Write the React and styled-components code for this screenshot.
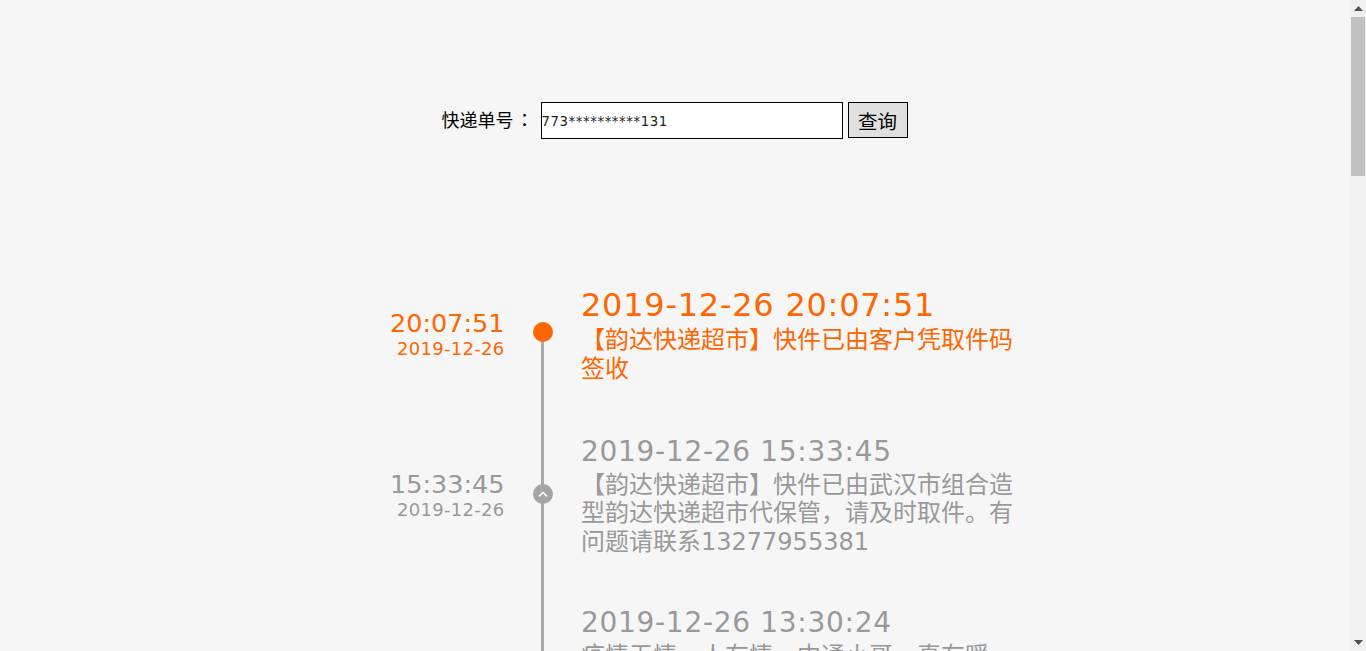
import styled, { createGlobalStyle } from "styled-components";

const GlobalStyle = createGlobalStyle`
  html, body {
    margin: 0;
    padding: 0;
    height: 651px;
    overflow: hidden;
    background: #f6f6f6;
  }
  body {
    font-family: "DejaVu Sans", "Noto Sans CJK SC", sans-serif;
  }
`;

const Page = styled.div`
  width: 1349px;
  height: 651px;
  overflow: hidden;
`;

const SearchForm = styled.form`
  display: flex;
  align-items: flex-start;
  justify-content: center;
  padding: 102px 0 0 0;
  height: 158px;
`;

const Label = styled.label`
  font-size: 18px;
  line-height: 34px;
  color: #000;
  margin-right: 9px;
  white-space: nowrap;
`;

const Colon = styled.span`
  font-family: "Noto Sans CJK TC", sans-serif;
  padding-left: 2px;
  margin-right: -2px;
`;

const Input = styled.input`
  box-sizing: border-box;
  width: 302px;
  height: 37px;
  border: 1px solid #000;
  background: #fff;
  padding: 1px 0 0;
  margin: 0;
  font-family: "DejaVu Sans", sans-serif;
  font-size: 13.33px;
  letter-spacing: 0.55px;
  color: #222;
  outline: none;
`;

const Button = styled.button`
  box-sizing: border-box;
  width: 60px;
  height: 36px;
  margin: 0 0 0 5px;
  padding: 1px 0 0;
  border: 1px solid #000;
  background: #e0e0e0;
  font-family: "Noto Sans CJK SC", sans-serif;
  font-size: 19.5px;
  color: #000;
`;

const Timeline = styled.ul`
  list-style: none;
  margin: 0;
  padding: 0;
`;

const Row = styled.li`
  display: grid;
  grid-template-columns: 505px 76px 452px;
  align-items: center;
  color: ${(p) => (p.$active ? "#ff6600" : "#999999")};
`;

const When = styled.div`
  text-align: right;
  white-space: nowrap;
  padding-right: 0.5px;
  margin-bottom: ${(p) => (p.$active ? "1.5px" : "0")};
  margin-top: ${(p) => (p.$active ? "0" : "1.5px")};
`;

const Clock = styled.div`
  font-size: 25.5px;
  line-height: 30px;
`;

const Day = styled.div`
  font-size: 18px;
  letter-spacing: 0.3px;
  line-height: 21px;
`;

const Axis = styled.div`
  position: relative;
  align-self: stretch;
  display: flex;
  align-items: center;
  &::before {
    content: "";
    position: absolute;
    left: 36px;
    width: 3px;
    background: #a9a9a9;
    top: ${(p) => (p.$first ? "50%" : "0")};
    bottom: 0;
  }
`;

const Dot = styled.span`
  position: relative;
  margin-left: 28px;
  margin-bottom: ${(p) => (p.$active ? "4.5px" : "0")};
  width: 20px;
  height: 20px;
  border-radius: 50%;
  background: ${(p) => (p.$active ? "#ff6600" : "#a5a5a5")};
  display: flex;
  align-items: center;
  justify-content: center;
`;

const Body = styled.div`
  padding: 25.25px 0 ${(p) => (p.$active ? "25.25px" : "23.25px")};
`;

const Stamp = styled.div`
  letter-spacing: ${(p) => (p.$active ? "0.75px" : "0.7px")};
  font-size: ${(p) => (p.$active ? "32px" : "28px")};
  line-height: ${(p) => (p.$active ? "40px" : "36px")};
  white-space: nowrap;
`;

const Detail = styled.div`
  margin-top: 1px;
  font-size: 24px;
  line-height: 28.5px;
`;

const Scrollbar = styled.aside`
  position: fixed;
  top: 0;
  right: 0;
  bottom: 0;
  width: 16px;
  background: #f1f1f1;
  display: flex;
  flex-direction: column;
  justify-content: space-between;
`;

const Arrow = styled.div`
  height: 17px;
  display: flex;
  align-items: center;
  justify-content: center;
`;

const Thumb = styled.div`
  position: absolute;
  top: 17px;
  left: 1px;
  width: 14px;
  height: 159px;
  background: #c1c1c1;
`;

const items = [
  {
    stamp: "2019-12-26 20:07:51",
    clock: "20:07:51",
    day: "2019-12-26",
    text: "【韵达快递超市】快件已由客户凭取件码签收",
  },
  {
    stamp: "2019-12-26 15:33:45",
    clock: "15:33:45",
    day: "2019-12-26",
    text: "【韵达快递超市】快件已由武汉市组合造型韵达快递超市代保管，请及时取件。有问题请联系13277955381",
  },
  {
    stamp: "2019-12-26 13:30:24",
    clock: "13:30:24",
    day: "2019-12-26",
    text: "疫情无情，人有情，中通小哥，真有暖，快件正在派送途中，请耐心等待，感谢您的理解与支持，如有疑问请及时联系快递员，我们将尽快为您处理，祝您生活愉快，身体健康，平安顺利",
  },
];

const App = () => {
  return (
    <>
      <GlobalStyle />
      <Page>
        <SearchForm>
          <Label>快递单号<Colon>：</Colon></Label>
          <Input defaultValue="773**********131" />
          <Button type="button">查询</Button>
        </SearchForm>
        <Timeline>
          {items.map((item, i) => (
            <Row key={item.stamp} $active={i === 0}>
              <When $active={i === 0}>
                <Clock>{item.clock}</Clock>
                <Day>{item.day}</Day>
              </When>
              <Axis $first={i === 0}>
                <Dot $active={i === 0}>
                  {i > 0 && (
                    <svg width="12" height="8" viewBox="0 0 12 8">
                      <path d="M2 6.5 L6 2.5 L10 6.5" fill="none" stroke="#fff" strokeWidth="1.6" />
                    </svg>
                  )}
                </Dot>
              </Axis>
              <Body $active={i === 0}>
                <Stamp $active={i === 0}>{item.stamp}</Stamp>
                <Detail>{item.text}</Detail>
              </Body>
            </Row>
          ))}
        </Timeline>
      </Page>
      <Scrollbar>
        <Arrow>
          <svg width="9" height="5" viewBox="0 0 9 5"><path d="M4.5 0 L9 5 L0 5 Z" fill="#505050" /></svg>
        </Arrow>
        <Thumb />
        <Arrow>
          <svg width="9" height="5" viewBox="0 0 9 5"><path d="M0 0 L9 0 L4.5 5 Z" fill="#505050" /></svg>
        </Arrow>
      </Scrollbar>
    </>
  );
};

export default App;
